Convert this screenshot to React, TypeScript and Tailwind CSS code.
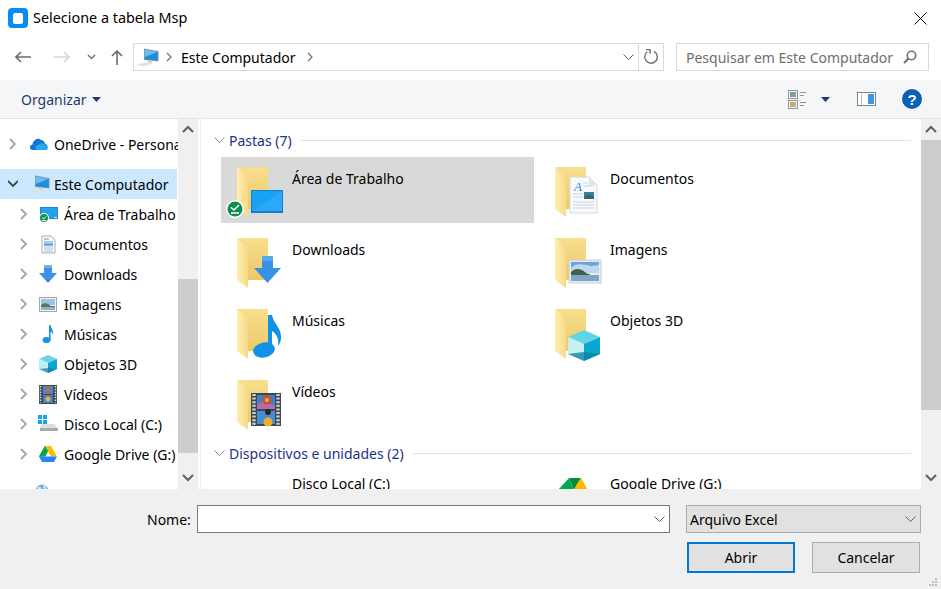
import React from 'react'

const Chevron = ({ open = false, className = '' }: { open?: boolean; className?: string }) => (
    <svg width="10" height="12" viewBox="0 0 10 12" className={className}>
        {open ? (
            <path d="M0 3 L5 8 L10 3" fill="none" stroke="#404040" strokeWidth="1.8" />
        ) : (
            <path d="M2 1 L7 6 L2 11" fill="none" stroke="#a6a6a6" strokeWidth="1.8" />
        )}
    </svg>
)

const Computer = () => (
    <svg width="22" height="19" viewBox="0 0 22 19">
        <path d="M7 0.5 L21.5 3 V13.5 L7 12 Z" fill="#8d9ba5" />
        <path d="M7.8 1.5 L20.8 3.8 V12.6 L7.8 11.2 Z" fill="#1f8cdc" />
        <path d="M7.8 1.5 L20.8 3.8 L7.8 9 Z" fill="#6cbdf0" />
        <path d="M11 12.5 h4 v2 h-4 Z" fill="#c4ccd2" />
        <path d="M0 16.5 L10 14 L16 15.5 L6 18.8 Z" fill="#dfe2e4" />
    </svg>
)

const OneDrive = () => (
    <svg width="20" height="14" viewBox="0 0 20 14">
        <path d="M4 13 C0 13 0 8 3.5 7.5 C4 3 9 0 12 3 C15 3 16 6 16 7 C19 7 20 13 16 13 Z" fill="#0f78d4" />
        <path d="M8 13 C5 11 7 8 9.5 8 C11 5.5 15 6 16 8 C19 8 20 13 16.5 13 Z" fill="#28a8ea" />
    </svg>
)

const SmallDesktop = () => (
    <svg width="19" height="19" viewBox="0 0 19 19">
        <rect x="1" y="2" width="18" height="12" fill="#1c86d1" />
        <rect x="2" y="3" width="16" height="10" fill="#25a0e8" />
        <rect x="15" y="12" width="3" height="1" fill="#d5e6f2" />
        <circle cx="5" cy="13" r="5" fill="#fff" />
        <circle cx="5" cy="13" r="4" fill="#10914f" />
        <path d="M3 12.5 L4.6 14 L7.2 11.4 M3 15.6 H7.2" fill="none" stroke="#fff" strokeWidth="1" />
    </svg>
)

const SmallDoc = () => (
    <svg width="15" height="19" viewBox="0 0 15 19">
        <path d="M1 1 H10 L14 5 V18 H1 Z" fill="#f8f9fa" stroke="#a9adb0" />
        <path d="M3 4 H8 M3 7 H12" stroke="#5f9bd1" strokeWidth="1" />
        <rect x="3" y="8.5" width="9" height="2" fill="#3a93da" />
        <path d="M3 12 H12 M3 14 H12 M3 16 H12" stroke="#a9c3da" strokeWidth="1" />
    </svg>
)

const SmallDown = () => (
    <svg width="18" height="18" viewBox="0 0 18 18">
        <path d="M5 0 H13 V8 H18 L9 18 L0 8 H5 Z" fill="#3a92e4" />
        <path d="M5 0 H13 V3 H5 Z" fill="#6eb2ee" />
    </svg>
)

const SmallPicture = () => (
    <svg width="18" height="15" viewBox="0 0 18 15">
        <rect x="0.5" y="0.5" width="17" height="14" fill="#f4f5f6" stroke="#a3a7ab" />
        <rect x="2" y="2" width="14" height="6" fill="#9cc3e2" />
        <path d="M2 8 C5 5 9 6 12 9 H16 V13 H2 Z" fill="#4e7a60" />
        <rect x="2" y="10" width="14" height="3" fill="#8fb0c7" />
    </svg>
)

const SmallNote = () => (
    <svg width="12" height="20" viewBox="0 0 12 20">
        <ellipse cx="4.5" cy="16" rx="4" ry="3" fill="#1793e6" />
        <path d="M7 1 H8.6 C9 5 12 6 11 11 C10.5 8.5 9.5 8 8.6 7.5 V16 H7 Z" fill="#1793e6" />
    </svg>
)

const SmallCube = () => (
    <svg width="18" height="18" viewBox="0 0 18 18">
        <path d="M9 0 L18 4 L9 8 L0 4 Z" fill="#65d6e4" />
        <path d="M0 4 L9 8 V18 L0 14 Z" fill="#bdeef3" />
        <path d="M18 4 L9 8 V18 L18 14 Z" fill="#10a5cf" />
        <path d="M9 13 L18 14 L9 18 L0 14 Z" fill="#0a7ea6" opacity="0.7" />
    </svg>
)

const SmallFilm = () => (
    <svg width="18" height="19" viewBox="0 0 18 19">
        <rect width="18" height="19" fill="#3d4a52" />
        <rect x="4" y="1" width="10" height="8" fill="#4a86c9" />
        <rect x="4" y="10" width="10" height="8" fill="#3f7fc6" />
        <circle cx="9" cy="5" r="2.6" fill="#d8642c" />
        <circle cx="9" cy="14" r="2.6" fill="#e2b23c" />
        <path d="M1.5 1 V18 M16.5 1 V18" stroke="#d4d8da" strokeWidth="1.6" strokeDasharray="1.5 1.2" />
    </svg>
)

const SmallDisk = () => (
    <svg width="20" height="18" viewBox="0 0 20 18">
        <path d="M0 0 H4 V4 H0 Z M5 0 H9 V4 H5 Z M0 5 H4 V9 H0 Z M5 5 H9 V9 H5 Z" fill="#12a5f0" />
        <path d="M4 9 L16 9 L20 13 V15 H2 V12 Z" fill="#dcdee0" />
        <path d="M2 13 H20 V16 H2 Z" fill="#a7abae" />
        <rect x="15" y="14" width="3" height="1" fill="#5bd15b" />
    </svg>
)

const DriveLogo = () => (
    <svg width="18" height="16" viewBox="0 0 18 16">
        <path d="M6 0 H12 L6 10.5 H0 Z" fill="#0f9d58" />
        <path d="M6 0 L9 5.2 L6 10.5 H0 Z" fill="#00ac47" />
        <path d="M12 0 L18 10.5 H12 L6 0 Z" fill="#ffba00" />
        <path d="M0 10.5 H18 L15 16 H3 Z" fill="#2684fc" />
    </svg>
)

const BigDriveLogo = () => (
    <svg width="32" height="12" viewBox="0 0 32 12">
        <path d="M0 12 L11 0 L16 12 Z" fill="#00a94f" />
        <path d="M11 0 H23 L16 12 Z" fill="#0a8a3c" />
        <path d="M19 6 L23 0 L30 12 H16 Z" fill="#ffba00" />
    </svg>
)

const Globe = () => (
    <svg width="14" height="14" viewBox="0 0 14 14">
        <circle cx="7" cy="7" r="6.5" fill="#6fb3dc" />
        <path d="M3 3 C6 2 7 5 5 6 C3 7 2 5 3 3 Z M8 1 C11 2 12 4 11 6 C9 5 8 3 8 1 Z" fill="#d7e9f3" />
    </svg>
)

const FolderBase = ({ kind }: { kind: string }) => (
    <>
        <defs>
            <linearGradient id={`back-${kind}`} x1="0" y1="0" x2="0" y2="1">
                <stop offset="0" stopColor="#f9de8e" />
                <stop offset="1" stopColor="#ebc968" />
            </linearGradient>
            <linearGradient id={`flap-${kind}`} x1="0" y1="0" x2="1" y2="0">
                <stop offset="0" stopColor="#ffeeb0" />
                <stop offset="1" stopColor="#f8d988" />
            </linearGradient>
        </defs>
        <path d="M16 10 H47 V52 H27 L16 52 Z" fill={`url(#back-${kind})`} />
        <path d="M16 10 L27 19 V60 L16 52 Z" fill={`url(#flap-${kind})`} />
    </>
)

const overlays: Record<string, React.ReactNode> = {
    desktop: (
        <>
            <rect x="30" y="33" width="32" height="23" fill="#0f7fd0" />
            <rect x="31" y="34" width="30" height="20" fill="#19a1f5" />
            <path d="M31 54 L61 34 V54 Z" fill="#3fb1f7" opacity="0.5" />
            <circle cx="14" cy="52" r="9" fill="#fff" />
            <circle cx="14" cy="52" r="7.5" fill="#0f8f4e" />
            <path d="M10 50.5 L13 53 L18 48 M10 56 H18" fill="none" stroke="#fff" strokeWidth="1.6" />
        </>
    ),
    down: (
        <>
            <path d="M41 28 H52 V40 H60 L46.5 55 L33 40 H41 Z" fill="#3a92e4" />
            <path d="M41 28 H52 V33 H41 Z" fill="#5aa6ea" />
        </>
    ),
    note: (
        <>
            <ellipse cx="43" cy="51" rx="11" ry="7.5" fill="#1192e6" transform="rotate(-12 43 51)" />
            <path d="M47 16 H51 C52 24 60 28 60 38 C60 42 59 45 57 47 C58 40 56 35 51 32 V50 H47 Z" fill="#1192e6" />
        </>
    ),
    film: (
        <>
            <rect x="30" y="23" width="30" height="33" fill="#3b4850" />
            <rect x="36" y="25" width="18" height="14" fill="#3f7fc6" />
            <rect x="36" y="41" width="18" height="13" fill="#4a8ad0" />
            <path d="M36 34 L44 31 L54 36 V39 H36 Z" fill="#b56aa8" />
            <circle cx="46" cy="30" r="4.5" fill="#cf4f28" />
            <circle cx="46" cy="30" r="2" fill="#e8b53c" />
            <circle cx="47" cy="52" r="4.5" fill="#e6b030" />
            <circle cx="47" cy="42" r="3" fill="#20262a" />
            <path d="M33 24 V55 M57 24 V55" stroke="#cfd3d6" strokeWidth="3.4" strokeDasharray="2 1.6" />
        </>
    ),
    doc: (
        <>
            <path d="M31 20 H50 L58 28 V56 H31 Z" fill="#f7f9fb" stroke="#d5d8da" />
            <path d="M50 20 V28 H58 Z" fill="#dfe3e6" />
            <text x="35" y="34" fontFamily="Liberation Serif, serif" fontStyle="italic" fontSize="13" fill="#2b8bd8">
                A
            </text>
            <path d="M44 26 H49 M44 29 H54 M34 37 H44 M34 40 H44 M34 45 H55 M34 48 H55 M34 51 H55" stroke="#c6d5e2" strokeWidth="1" />
            <rect x="45" y="35" width="10" height="7" fill="#2f7fa8" />
            <path d="M45 40 L50 37 L55 40 V42 H45 Z" fill="#3c6a58" />
        </>
    ),
    picture: (
        <>
            <rect x="30" y="32" width="32" height="23" fill="#e4ebf1" stroke="#c6d0d8" />
            <rect x="32" y="34" width="28" height="11" fill="#69a4dc" />
            <path d="M32 40 C36 35 44 36 52 38 L60 37 V45 H32 Z" fill="#d5e5f2" opacity="0.8" />
            <path d="M32 44 C36 40 42 40 47 45 L52 47 H32 Z" fill="#3f6248" />
            <rect x="32" y="47" width="28" height="6" fill="#7fa5c6" />
        </>
    ),
    cube: (
        <>
            <path d="M45 31 L61 38 L45 45 L29 38 Z" fill="#62d5e4" />
            <path d="M29 38 L45 45 V62 L29 55 Z" fill="#c7f0f4" />
            <path d="M61 38 L45 45 V62 L61 55 Z" fill="#0aa6d2" />
            <path d="M45 53 L61 55 L45 62 L29 55 Z" fill="#0a7d9f" opacity="0.75" />
        </>
    ),
}

const BigIcon = ({ kind }: { kind: string }) => (
    <svg width="69" height="66" viewBox="0 0 69 66" className="shrink-0">
        <FolderBase kind={kind} />
        {overlays[kind]}
    </svg>
)

const TreeRow = ({
    label,
    icon,
    root = false,
    open = false,
    active = false,
}: {
    label: string
    icon: React.ReactNode
    root?: boolean
    open?: boolean
    active?: boolean
}) => (
    <div className={`flex h-[30px] shrink-0 items-center whitespace-nowrap ${root ? 'pl-[8px]' : 'pl-[19px]'} ${active ? 'mr-px bg-[#cce8ff]' : ''}`}>
        <span className="flex w-[10px] shrink-0 justify-center">
            <Chevron open={open} />
        </span>
        <span className={`ml-[9px] flex shrink-0 items-center justify-center ${root ? 'w-[24px]' : 'w-[20px]'}`}>{icon}</span>
        <span className={`shrink-0 ${root ? 'ml-[3px]' : 'ml-[6px]'}`}>{label}</span>
    </div>
)

const GroupHeader = ({ label }: { label: string }) => (
    <div className="flex h-[18px] items-center pl-[13px] pr-[10px] text-[#1e3287]">
        <svg width="11" height="7" viewBox="0 0 11 7">
            <path d="M0.5 0.5 L5.5 5.5 L10.5 0.5" fill="none" stroke="#8a8a8a" strokeWidth="1" />
        </svg>
        <span className="ml-[4px] whitespace-nowrap">{label}</span>
        <span className="ml-[9px] h-px flex-1 bg-[#e2e2e2]" />
    </div>
)

const Tile = ({ kind, label, selected = false }: { kind: string; label: string; selected?: boolean }) => (
    <div className={`flex h-[66px] ${selected ? 'bg-[#d9d9d9]' : ''}`}>
        <BigIcon kind={kind} />
        <span className="ml-[2px] mt-[12px] leading-[20px]">{label}</span>
    </div>
)

const ScrollBar = ({ thumbTop, thumbHeight, bottom }: { thumbTop: string; thumbHeight: string; bottom: string }) => (
    <div className="flex w-[20px] shrink-0 flex-col items-center bg-[#f0f0f0]">
        <svg width="12" height="8" viewBox="0 0 12 8" className="mt-[6px] shrink-0">
            <path d="M1 7 L6 2 L11 7" fill="none" stroke="#606060" strokeWidth="2" />
        </svg>
        <div className={`w-full shrink-0 bg-[#cdcdcd] ${thumbTop} ${thumbHeight}`} />
        <svg width="12" height="8" viewBox="0 0 12 8" className={`mt-auto shrink-0 ${bottom}`}>
            <path d="M1 1 L6 6 L11 1" fill="none" stroke="#606060" strokeWidth="2" />
        </svg>
    </div>
)

const SmallChevronDown = ({ className = '' }: { className?: string }) => (
    <svg width="11" height="7" viewBox="0 0 11 7" className={className}>
        <path d="M0.5 0.5 L5.5 5.5 L10.5 0.5" fill="none" stroke="#606060" strokeWidth="1" />
    </svg>
)

const App = () => {
    return (
        <div className="relative flex h-[589px] w-[941px] flex-col overflow-hidden bg-white font-['Noto_Sans',sans-serif] text-[14px] text-black">
            {/* title bar */}
            <div className="flex h-[36px] shrink-0 items-center pl-[8px] pr-[14px]">
                <div className="flex h-[20px] w-[20px] items-center justify-center rounded-[4px] bg-[#0a8cf0]">
                    <div className="h-[11px] w-[10px] rounded-[2px] bg-white" />
                </div>
                <span className="ml-[5px] text-[14.4px]">Selecione a tabela Msp</span>
                <svg width="13" height="13" viewBox="0 0 13 13" className="ml-auto">
                    <path d="M0.5 0.5 L12.5 12.5 M12.5 0.5 L0.5 12.5" stroke="#000" strokeWidth="1" />
                </svg>
            </div>

            {/* navigation */}
            <div className="flex h-[44px] shrink-0 items-center pb-[2px]">
                <svg width="16" height="12" viewBox="0 0 16 12" className="ml-[15px]">
                    <path d="M6 1 L1 6 L6 11 M1 6 H16" fill="none" stroke="#6d6d6d" strokeWidth="1.6" />
                </svg>
                <svg width="16" height="12" viewBox="0 0 16 12" className="ml-[23px]">
                    <path d="M10 1 L15 6 L10 11 M0 6 H15" fill="none" stroke="#d5d5d5" strokeWidth="1.6" />
                </svg>
                <svg width="9" height="6" viewBox="0 0 9 6" className="ml-[17px]">
                    <path d="M1 1 L4.5 4.5 L8 1" fill="none" stroke="#707070" strokeWidth="1.5" />
                </svg>
                <svg width="12" height="15" viewBox="0 0 12 15" className="ml-[15px]">
                    <path d="M1 6 L6 1 L11 6 M6 1 V15" fill="none" stroke="#6d6d6d" strokeWidth="1.6" />
                </svg>
                <div className="ml-[10px] flex h-[28px] w-[531px] items-center border border-[#d9d9d9]">
                    <span className="ml-[3px] flex">
                        <Computer />
                    </span>
                    <svg width="6" height="10" viewBox="0 0 6 10" className="ml-[7px]">
                        <path d="M1 1 L5 5 L1 9" fill="none" stroke="#707070" strokeWidth="1.2" />
                    </svg>
                    <span className="ml-[9px]">Este Computador</span>
                    <svg width="6" height="10" viewBox="0 0 6 10" className="ml-[11px]">
                        <path d="M1 1 L5 5 L1 9" fill="none" stroke="#707070" strokeWidth="1.2" />
                    </svg>
                    <SmallChevronDown className="ml-auto mr-[4px]" />
                    <span className="h-full w-px bg-[#d9d9d9]" />
                    <svg width="16" height="16" viewBox="0 0 16 16" className="mx-[4px]">
                        <path d="M11 2.4 A6.3 6.3 0 1 1 4.4 2.8" fill="none" stroke="#707070" strokeWidth="1.4" />
                        <path d="M3 0.5 H7 V4.8" fill="none" stroke="#707070" strokeWidth="1.4" />
                    </svg>
                </div>
                <div className="ml-[12px] flex h-[28px] w-[253px] items-center border border-[#d9d9d9] pl-[9px] text-[#6d6d6d]">
                    <span className="whitespace-nowrap">Pesquisar em Este Computador</span>
                    <svg width="14" height="14" viewBox="0 0 14 14" className="ml-auto mr-[11px]">
                        <circle cx="8.5" cy="5.5" r="4.2" fill="none" stroke="#707070" strokeWidth="1.6" />
                        <path d="M5.5 8.5 L1 13" stroke="#707070" strokeWidth="2.2" />
                    </svg>
                </div>
            </div>

            {/* command bar */}
            <div className="flex h-[39px] shrink-0 items-center border-b border-[#e5e5e5] bg-[#f5f6f7] pl-[21px] text-[#1f3a6e]">
                <span>Organizar</span>
                <svg width="9" height="5" viewBox="0 0 9 5" className="ml-[5px]">
                    <path d="M0 0 H9 L4.5 5 Z" fill="#1f3a6e" />
                </svg>
                <svg width="19" height="19" viewBox="0 0 19 19" className="ml-auto">
                    <rect x="0.5" y="0.5" width="9" height="8" fill="#f2f4f5" stroke="#8f9598" />
                    <rect x="2" y="2" width="6" height="5" fill="#7f9f98" />
                    <rect x="0.5" y="10.5" width="9" height="8" fill="#f2f4f5" stroke="#8f9598" />
                    <rect x="2" y="12" width="3" height="5" fill="#d9a06a" />
                    <rect x="5" y="12" width="3" height="5" fill="#a9bd7f" />
                    <path d="M12 2.5 H18 M12 5.5 H16 M12 12.5 H18 M12 15.5 H16" stroke="#8f9598" strokeWidth="1" />
                </svg>
                <svg width="9" height="5" viewBox="0 0 9 5" className="ml-[14px]">
                    <path d="M0 0 H9 L4.5 5 Z" fill="#1f3a6e" />
                </svg>
                <svg width="19" height="14" viewBox="0 0 19 14" className="ml-[27px]">
                    <rect x="0.5" y="0.5" width="18" height="13" fill="#fff" stroke="#7d8589" />
                    <rect x="11" y="2" width="6" height="10" fill="#3f96e0" />
                    <path d="M4.5 1 V13" stroke="#bfc4c7" strokeWidth="1" />
                </svg>
                <div className="ml-[26px] mr-[19px] flex h-[20px] w-[20px] items-center justify-center rounded-full bg-[#0a5fb8] font-['Liberation_Sans',sans-serif] text-[15px] font-bold leading-none text-white">
                    ?
                </div>
            </div>

            {/* body */}
            <div className="flex min-h-0 flex-1">
                <div className="flex w-[178px] shrink-0 flex-col overflow-hidden pt-[10px]">
                    <TreeRow root label="OneDrive - Personal" icon={<OneDrive />} />
                    <div className="h-[10px] shrink-0" />
                    <TreeRow root open active label="Este Computador" icon={<Computer />} />
                    <TreeRow label="Área de Trabalho" icon={<SmallDesktop />} />
                    <TreeRow label="Documentos" icon={<SmallDoc />} />
                    <TreeRow label="Downloads" icon={<SmallDown />} />
                    <TreeRow label="Imagens" icon={<SmallPicture />} />
                    <TreeRow label="Músicas" icon={<SmallNote />} />
                    <TreeRow label="Objetos 3D" icon={<SmallCube />} />
                    <TreeRow label="Vídeos" icon={<SmallFilm />} />
                    <TreeRow label="Disco Local (C:)" icon={<SmallDisk />} />
                    <TreeRow label="Google Drive (G:)" icon={<DriveLogo />} />
                    <div className="ml-[35px] mt-[15px] flex">
                        <Globe />
                    </div>
                </div>
                <ScrollBar thumbTop="mt-[146px]" thumbHeight="h-[174px]" bottom="mb-[7px]" />
                <div className="w-[2px] shrink-0" />
                <div className="w-px shrink-0 bg-[#f0f0f0]" />

                <div className="min-w-0 flex-1 overflow-hidden pt-[12px]">
                    <GroupHeader label="Pastas (7)" />
                    <div className="mt-[8px] grid grid-cols-[313px_313px] gap-x-[5px] gap-y-[5px] pl-[20px]">
                        <Tile selected kind="desktop" label="Área de Trabalho" />
                        <Tile kind="doc" label="Documentos" />
                        <Tile kind="down" label="Downloads" />
                        <Tile kind="picture" label="Imagens" />
                        <Tile kind="note" label="Músicas" />
                        <Tile kind="cube" label="Objetos 3D" />
                        <Tile kind="film" label="Vídeos" />
                    </div>
                    <div className="mt-[8px]">
                        <GroupHeader label="Dispositivos e unidades (2)" />
                    </div>
                    <div className="grid grid-cols-[313px_313px] gap-x-[5px] pl-[20px]">
                        <div className="flex h-[66px] pl-[71px]">
                            <span className="mt-[12px] leading-[20px]">Disco Local (C:)</span>
                        </div>
                        <div className="flex h-[66px]">
                            <div className="ml-[19px] mt-[16px] flex w-[50px] shrink-0">
                                <BigDriveLogo />
                            </div>
                            <span className="ml-[2px] mt-[12px] leading-[20px]">Google Drive (G:)</span>
                        </div>
                    </div>
                </div>
                <ScrollBar thumbTop="mt-[7px]" thumbHeight="h-[270px]" bottom="mb-[7px]" />
            </div>

            {/* footer */}
            <div className="flex h-[100px] shrink-0 flex-col bg-[#f0f0f0] pl-[147px] pt-[16px]">
                <div className="flex h-[28px] items-center">
                    <span className="w-[50px]">Nome:</span>
                    <div className="flex h-full w-[473px] items-center justify-end border border-[#7a7a7a] bg-white pr-[4px]">
                        <SmallChevronDown />
                    </div>
                    <div className="ml-[16px] flex h-full w-[235px] items-center justify-between border border-[#adadad] bg-[#e1e1e1] pl-[3px] pr-[4px]">
                        <span>Arquivo Excel</span>
                        <SmallChevronDown />
                    </div>
                </div>
                <div className="mt-[9px] flex h-[31px] pl-[540px]">
                    <div className="flex h-full w-[108px] items-center justify-center border-2 border-[#0078d7] bg-[#e1e1e1]">Abrir</div>
                    <div className="ml-[17px] flex h-full w-[108px] items-center justify-center border border-[#adadad] bg-[#e1e1e1]">Cancelar</div>
                </div>
            </div>

            {/* resize grip */}
            <svg width="10" height="10" viewBox="0 0 10 10" className="absolute bottom-[2px] right-[3px]">
                <path d="M7 1 h2 v2 h-2 Z M4 4 h2 v2 h-2 Z M7 4 h2 v2 h-2 Z M1 7 h2 v2 h-2 Z M4 7 h2 v2 h-2 Z M7 7 h2 v2 h-2 Z" fill="#bdbdbd" />
            </svg>
        </div>
    )
}

export default App
